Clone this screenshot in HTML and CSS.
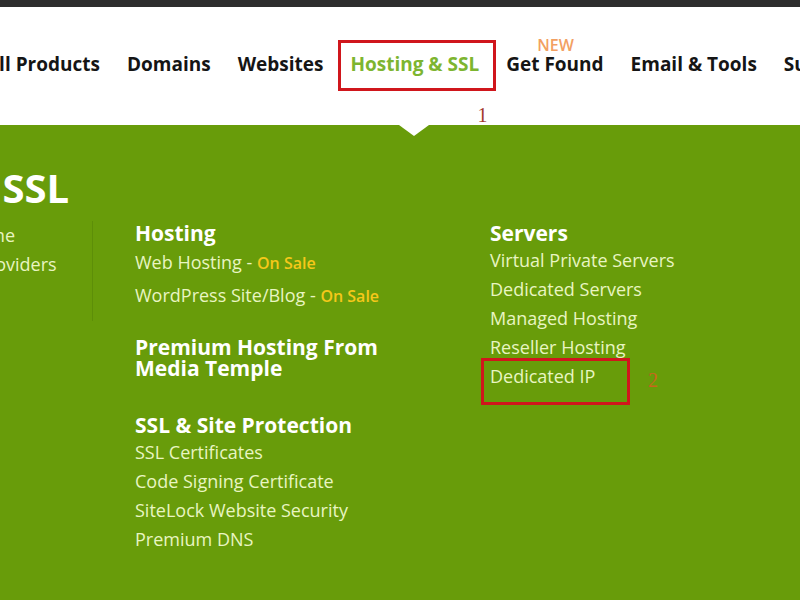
FILE: index.html
```html
<!DOCTYPE html>
<html lang="en">
<head>
    <meta charset="UTF-8">
    <meta name="viewport" content="width=device-width, initial-scale=1.0">
    <title>Hosting &amp; SSL</title>
    <link rel="stylesheet" href="styles.css">
</head>
<body>
    <div class="top-bar"></div>

    <div class="nav">
        <ul class="nav-list">
            <li class="nav-item">All Products</li>
            <li class="nav-item">Domains</li>
            <li class="nav-item">Websites</li>
            <li class="nav-item active">Hosting &amp; SSL<span class="mark mark-one">1</span></li>
            <li class="nav-item">Get Found<span class="new-tag">NEW</span></li>
            <li class="nav-item">Email &amp; Tools</li>
            <li class="nav-item">Support</li>
        </ul>
    </div>

    <div class="menu-panel">
        <div class="pointer"></div>
        <h1 class="panel-title">Hosting &amp; SSL</h1>

        <div class="columns">
            <div class="col-side">
                <a class="menu-link">Hosting Home</a>
                <a class="menu-link">Compare Providers</a>
            </div>

            <div class="col-main">
                <div class="group">
                    <h3 class="group-title">Hosting</h3>
                    <a class="menu-link tall">Web Hosting - <span class="sale">On Sale</span></a>
                    <a class="menu-link tall">WordPress Site/Blog - <span class="sale">On Sale</span></a>
                </div>
                <div class="group group-premium">
                    <h3 class="group-title">Premium Hosting From<br>Media Temple</h3>
                </div>
                <div class="group group-ssl">
                    <h3 class="group-title">SSL &amp; Site Protection</h3>
                    <a class="menu-link">SSL Certificates</a>
                    <a class="menu-link">Code Signing Certificate</a>
                    <a class="menu-link">SiteLock Website Security</a>
                    <a class="menu-link">Premium DNS</a>
                </div>
            </div>

            <div class="col-servers">
                <div class="group">
                    <h3 class="group-title">Servers</h3>
                    <a class="menu-link">Virtual Private Servers</a>
                    <a class="menu-link">Dedicated Servers</a>
                    <a class="menu-link">Managed Hosting</a>
                    <a class="menu-link">Reseller Hosting</a>
                    <a class="menu-link boxed">Dedicated IP<span class="mark mark-two">2</span></a>
                </div>
            </div>
        </div>
    </div>
</body>
</html>
```

FILE: styles.css
```css
* {
    margin: 0;
    padding: 0;
    box-sizing: border-box;
}

body {
    font-family: "Open Sans", "Liberation Sans", sans-serif;
    background: #fff;
    width: 800px;
    height: 600px;
    overflow: hidden;
}

.top-bar {
    height: 7px;
    background: #2e2e2e;
}

.nav {
    height: 118px;
    background: #fff;
    display: flex;
    align-items: center;
    padding-bottom: 4px;
}

.nav-list {
    list-style: none;
    display: flex;
    gap: 27px;
    margin-left: -14px;
    white-space: nowrap;
}

.nav-item {
    position: relative;
    font-size: 19px;
    font-weight: 700;
    color: #151515;
}

.nav-item.active {
    color: #7db530;
}

.nav-item.active::after {
    content: "";
    position: absolute;
    top: -11px;
    bottom: -14px;
    left: -12px;
    right: -17px;
    border: 3px solid #d0161c;
}

.new-tag {
    position: absolute;
    left: 31px;
    top: -17px;
    font-size: 16px;
    font-weight: 600;
    color: #f2a062;
}

.mark {
    position: absolute;
    font-family: "Liberation Serif", serif;
    font-weight: 400;
    font-size: 20px;
}

.mark-one {
    left: 127px;
    top: 53px;
    color: #a3382c;
}

.menu-panel {
    position: relative;
    height: 475px;
    background: #689c0a;
    padding-top: 38px;
}

.pointer {
    position: absolute;
    top: 0;
    left: 399px;
    border-top: 11px solid #fff;
    border-left: 15px solid transparent;
    border-right: 15px solid transparent;
}

.panel-title {
    font-size: 40px;
    font-weight: 700;
    color: #fff;
    line-height: 50px;
    margin-left: -202px;
    white-space: nowrap;
}

.columns {
    display: flex;
    margin-top: 8px;
}

.col-side {
    width: 198px;
    margin-left: -105px;
    height: 100px;
    border-right: 1px solid #5d8e08;
    display: flex;
    flex-direction: column;
}

.col-main {
    width: 397px;
    padding-left: 42px;
}

.col-servers {
    flex: 1;
}

.group {
    display: flex;
    flex-direction: column;
    align-items: flex-start;
}

.group-premium {
    margin-top: 25px;
}

.group-ssl {
    margin-top: 33px;
}

.group-title {
    font-size: 21px;
    font-weight: 700;
    line-height: 24px;
    color: #fff;
    margin-bottom: 1px;
    white-space: nowrap;
}

.group-premium .group-title {
    line-height: 21px;
}

.menu-link {
    display: block;
    font-size: 18px;
    line-height: 29px;
    color: #e9f5c2;
    white-space: nowrap;
}

.menu-link.tall {
    line-height: 32px;
}

.sale {
    font-size: 16px;
    font-weight: 600;
    color: #f5c81a;
}

.boxed {
    position: relative;
}

.boxed::after {
    content: "";
    position: absolute;
    top: -4px;
    bottom: -14px;
    left: -9px;
    width: 143px;
    border: 3px solid #d0161c;
}

.mark-two {
    left: 158px;
    top: 4px;
    color: #c8661c;
}
```
